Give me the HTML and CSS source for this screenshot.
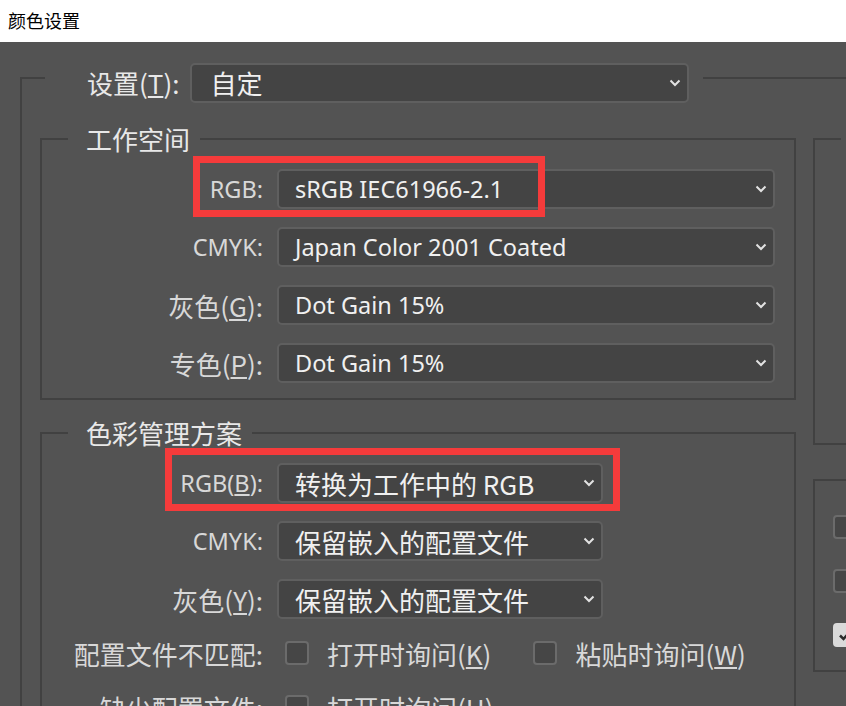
FILE: index.html
```html
<!DOCTYPE html>
<html lang="zh-CN">

<head>
    <meta charset="utf-8">
    <title>颜色设置</title>

    <link rel="stylesheet" href="styles.css">

</head>

<body>

    <div class="titlebar">颜色设置</div>

    <div class="dialog">

        <fieldset class="frame">
            <legend class="preset">
                <div class="preset-row">
                    <span class="preset-label">设置(<u>T</u>):</span>
                    <div class="select preset-select">
                        <span>自定</span>
                        <svg class="chev" viewBox="0 0 12 8"><polyline points="1.5,1.5 6,6 10.5,1.5" /></svg>
                    </div>
                </div>
            </legend>

            <div class="columns">

                <div class="col-left">

                    <fieldset class="group">
                        <legend>工作空间</legend>

                        <div class="row">
                            <span class="label en">RGB:</span>
                            <div class="select wide">
                                <span class="en">sRGB IEC61966-2.1</span>
                                <svg class="chev" viewBox="0 0 12 8"><polyline points="1.5,1.5 6,6 10.5,1.5" /></svg>
                            </div>
                            <div class="mark mark-space"></div> <!-- marcado en rojo -->
                        </div>

                        <div class="row">
                            <span class="label en">CMYK:</span>
                            <div class="select wide">
                                <span class="en">Japan Color 2001 Coated</span>
                                <svg class="chev" viewBox="0 0 12 8"><polyline points="1.5,1.5 6,6 10.5,1.5" /></svg>
                            </div>
                        </div>

                        <div class="row">
                            <span class="label">灰色(<u>G</u>):</span>
                            <div class="select wide">
                                <span class="en">Dot Gain 15%</span>
                                <svg class="chev" viewBox="0 0 12 8"><polyline points="1.5,1.5 6,6 10.5,1.5" /></svg>
                            </div>
                        </div>

                        <div class="row">
                            <span class="label">专色(<u>P</u>):</span>
                            <div class="select wide">
                                <span class="en">Dot Gain 15%</span>
                                <svg class="chev" viewBox="0 0 12 8"><polyline points="1.5,1.5 6,6 10.5,1.5" /></svg>
                            </div>
                        </div>
                    </fieldset>

                    <fieldset class="group policies">
                        <legend>色彩管理方案</legend>

                        <div class="row">
                            <span class="label en">RGB(<u>B</u>):</span>
                            <div class="select narrow">
                                <span>转换为工作中的 RGB</span>
                                <svg class="chev" viewBox="0 0 12 8"><polyline points="1.5,1.5 6,6 10.5,1.5" /></svg>
                            </div>
                            <div class="mark mark-policy"></div>
                        </div>

                        <div class="row">
                            <span class="label en">CMYK:</span>
                            <div class="select narrow">
                                <span>保留嵌入的配置文件</span>
                                <svg class="chev" viewBox="0 0 12 8"><polyline points="1.5,1.5 6,6 10.5,1.5" /></svg>
                            </div>
                        </div>

                        <div class="row">
                            <span class="label">灰色(<u>Y</u>):</span>
                            <div class="select narrow">
                                <span>保留嵌入的配置文件</span>
                                <svg class="chev" viewBox="0 0 12 8"><polyline points="1.5,1.5 6,6 10.5,1.5" /></svg>
                            </div>
                        </div>

                        <div class="check-row">
                            <span class="label">配置文件不匹配:</span>
                            <label class="option"><span class="box"></span>打开时询问(<u>K</u>)</label>
                            <label class="option"><span class="box"></span>粘贴时询问(<u>W</u>)</label>
                        </div>

                        <div class="check-row">
                            <span class="label">缺少配置文件:</span>
                            <label class="option"><span class="box"></span>打开时询问(<u>H</u>)</label>
                        </div>
                    </fieldset>

                </div>

                <div class="col-right">

                    <fieldset class="side conversion">
                        <legend>转换选项</legend>
                    </fieldset>

                    <fieldset class="side advanced">
                        <legend>高级控制</legend>
                        <label class="option side-option"><span class="box"></span>降低显示器色彩饱和度</label>
                        <label class="option side-option"><span class="box"></span>用灰度系数混合 RGB 颜色</label>
                        <label class="option side-option">
                            <span class="box checked">
                                <svg viewBox="0 0 16 16"><polyline points="3,8.5 6.5,12 13,4.5" /></svg>
                            </span>用灰度系数混合文本颜色
                        </label>
                    </fieldset>

                </div>

            </div>
        </fieldset>

    </div>

</body>

</html>
```

FILE: styles.css
```css
* {
    padding: 0;
    margin: 0;
    box-sizing: border-box;
}

html,
body {
    height: 100%;
    overflow: hidden;
}

body {
    background: #535353;
    font-family: "Noto Sans CJK SC", "Noto Sans", sans-serif;
    font-size: 26px;
    color: #d8d8d8;
}

/* textos latinos: mas estrechos que el latin de la fuente CJK */
.en {
    font-family: "Noto Sans", "Noto Sans CJK SC", sans-serif;
    font-size: 23.5px;
}

.titlebar {
    height: 42px;
    background: #ffffff;
    color: #000000;
    font-size: 18px;
    line-height: 40px;
    padding-left: 8px;
}

.dialog {
    width: 1200px;
    padding: 11px 0 0 20px;
}

fieldset {
    border: 2px solid #414141;
    min-width: 0;
}

legend {
    line-height: 34px;
    color: #e8e8e8;
}

/* marco exterior, con la fila "设置" sobre el borde */
.frame {
    padding: 19px 0 40px 18px;
}

.preset {
    margin-left: 5px;
    padding: 10px 14px 0 42px;
}

.preset-row {
    display: flex;
    align-items: center;
}

.preset-label {
    margin-right: 11px;
    line-height: 40px;
}

.columns {
    display: flex;
    align-items: flex-start;
}

.col-left {
    width: 756px;
}

.col-right {
    width: 300px;
    margin-left: 17px;
}

.group {
    padding: 13px 19px 15px 0;
}

.group legend,
.side legend {
    margin-left: 26px;
    padding: 0 10px 0 18px;
}

.policies {
    margin-top: 16px;
    padding-bottom: 40px;
}

.row {
    position: relative;
    display: flex;
    align-items: center;
    height: 40px;
}

.row + .row {
    margin-top: 18px;
}

.label {
    width: 221px;
    flex-shrink: 0;
    text-align: right;
    margin-right: 14px;
}

.select {
    height: 40px;
    display: flex;
    align-items: center;
    justify-content: space-between;
    padding: 0 6px 0 16px;
    border: 2px solid #5f5f5f;
    border-radius: 5px;
    background: #444444;
    color: #f0f0f0;
    white-space: nowrap;
}

.preset-select {
    width: 499px;
    padding-left: 18px;
}

.wide {
    width: 498px;
}

.narrow {
    width: 326px;
}

.chev {
    width: 12px;
    height: 8px;
    fill: none;
    stroke: #e2e2e2;
    stroke-width: 2;
}

/* recuadros rojos de la captura */
.mark {
    position: absolute;
    border: 7px solid #f53b3b;
    pointer-events: none;
}

.mark-space {
    left: 151px;
    top: -13px;
    width: 352px;
    height: 61px;
}

.mark-policy {
    left: 123px;
    top: -15px;
    width: 455px;
    height: 63px;
}

.check-row {
    display: flex;
    align-items: center;
    height: 40px;
    margin-top: 14px;
}

.row + .check-row {
    margin-top: 14px;
}

.check-row .label {
    margin-right: 22px;
}

.option {
    display: flex;
    align-items: center;
    white-space: nowrap;
    margin-right: 42px;
}

.box {
    width: 24px;
    height: 24px;
    flex-shrink: 0;
    margin-right: 18px;
    border: 2px solid #6b6b6b;
    border-radius: 4px;
    background: #464646;
}

.box.checked {
    background: #dadada;
    border-color: #dadada;
    display: flex;
    align-items: center;
    justify-content: center;
}

.box.checked svg {
    width: 16px;
    height: 16px;
    fill: none;
    stroke: #2b2b2b;
    stroke-width: 2.5;
}

.conversion {
    height: 323px;
}

.advanced {
    margin-top: 18px;
    padding: 10px 0 15px 18px;
}

.side-option {
    height: 40px;
}

.side-option + .side-option {
    margin-top: 14px;
}
```
